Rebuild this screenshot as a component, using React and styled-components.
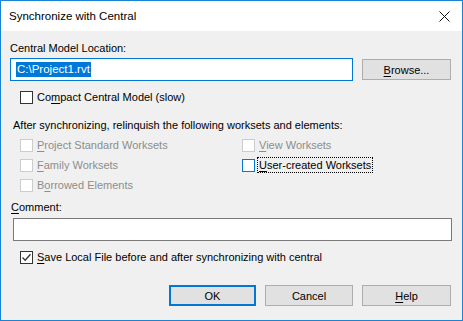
import React from 'react';
import styled, { createGlobalStyle } from 'styled-components';

const Global = createGlobalStyle`
  html, body { margin: 0; padding: 0; background: #ffffff; }
  * { box-sizing: border-box; }
`;

const Window = styled.div`
  width: 463px;
  height: 321px;
  border: 1px solid #1883d7;
  background: #f0f0f0;
  display: flex;
  flex-direction: column;
  font-family: "Liberation Sans", Arial, sans-serif;
  font-size: 11px;
  color: #000;
`;

const TitleBar = styled.div`
  height: 30px;
  background: #fff;
  display: flex;
  align-items: center;
  justify-content: space-between;
  padding: 0 12px 0 8px;
  font-size: 11.5px;
`;

const Close = styled.svg`
  width: 11px;
  height: 11px;
`;

const Body = styled.div`
  display: flex;
  flex-direction: column;
  padding: 0 10px 0 9px;
`;

const Label = styled.div`
  height: 16px;
  line-height: 16px;
  margin-top: ${p => p.top || 0}px;
  padding-left: ${p => p.indent || 0}px;
`;

const Row = styled.div`
  display: flex;
  align-items: center;
  gap: ${p => p.gap || 0}px;
  margin-top: ${p => p.top || 0}px;
  padding-left: ${p => p.indent || 0}px;
`;

const Field = styled.div`
  height: 23px;
  background: #fff;
  border: 1px solid ${p => (p.focused ? '#0078d7' : '#7a7a7a')};
  display: flex;
  align-items: center;
  padding-left: 5px;
  width: ${p => p.width}px;
`;

const Selected = styled.span`
  background: #0078d7;
  color: #fff;
  font-size: 11.5px;
  line-height: 15px;
  padding: 0 1px;
`;

const Button = styled.div`
  width: ${p => p.width || 88}px;
  height: 21px;
  background: #e1e1e1;
  border: ${p => (p.primary ? '2px solid #0078d7' : '1px solid #adadad')};
  display: flex;
  align-items: center;
  justify-content: center;
`;

const Check = styled.label`
  display: flex;
  align-items: center;
  height: 16px;
  color: ${p => (p.disabled ? '#8d8d8d' : '#000')};
`;

const Box = styled.span`
  width: 13px;
  height: 13px;
  background: #fff;
  border: 1px solid ${p => (p.disabled ? '#cccccc' : p.hot ? '#0078d7' : '#333333')};
  margin-right: 3px;
  display: flex;
  align-items: center;
  justify-content: center;
  flex-shrink: 0;
`;

const Caption = styled.span`
  padding: 0 1px;
  line-height: 14px;
  outline: ${p => (p.focus ? '1px dotted #000' : 'none')};
  outline-offset: 0;
`;

const Grid = styled.div`
  display: grid;
  grid-template-columns: 222px 1fr;
  row-gap: 4px;
  margin-top: 4px;
  padding-left: 10px;
`;

const Footer = styled.div`
  display: flex;
  justify-content: flex-end;
  gap: 9px;
  margin-top: 20px;
  padding-right: 1px;
`;

const U = styled.u`
  text-decoration-thickness: 1px;
  text-underline-offset: 2px;
`;

const Tick = () => (
  <svg width="11" height="11" viewBox="0 0 11 11">
    <path d="M1.5 5.5 L4.2 8.3 L9.5 2.2" fill="none" stroke="#333" strokeWidth="1.3" />
  </svg>
);

const CheckItem = ({ pre = '', u, post, disabled, hot, focus, checked }) => (
  <Check disabled={disabled}>
    <Box disabled={disabled} hot={hot}>{checked && <Tick />}</Box>
    <Caption focus={focus}>
      {pre}<U>{u}</U>{post}
    </Caption>
  </Check>
);

const App = () => (
  <>
    <Global />
    <Window>
      <TitleBar>
        <span>Synchronize with Central</span>
        <Close viewBox="0 0 11 11">
          <path d="M0.5 0.5 L10.5 10.5 M10.5 0.5 L0.5 10.5" stroke="#111" strokeWidth="1" />
        </Close>
      </TitleBar>
      <Body>
        <Label top={9}>Central Model Location:</Label>
        <Row top={2} gap={9}>
          <Field width={343} focused>
            <Selected>C:\Project1.rvt</Selected>
          </Field>
          <Button width={89}><span><U>B</U>rowse...</span></Button>
        </Row>
        <Row top={8} indent={10}>
          <CheckItem pre="Co" u="m" post="pact Central Model (slow)" />
        </Row>
        <Label top={12} indent={3}>After synchronizing, relinquish the following worksets and elements:</Label>
        <Grid>
          <CheckItem u="P" post="roject Standard Worksets" disabled />
          <CheckItem u="V" post="iew Worksets" disabled />
          <CheckItem u="F" post="amily Worksets" disabled />
          <CheckItem u="U" post="ser-created Worksets" hot focus />
          <CheckItem pre="B" u="o" post="rrowed Elements" disabled />
        </Grid>
        <Label top={6} indent={1}><U>C</U>omment:</Label>
        <Row top={3} indent={3}>
          <Field width={440} />
        </Row>
        <Row top={8} indent={10}>
          <CheckItem u="S" post="ave Local File before and after synchronizing with central" checked />
        </Row>
        <Footer>
          <Button width={87} primary>OK</Button>
          <Button width={88}>Cancel</Button>
          <Button width={89}><span><U>H</U>elp</span></Button>
        </Footer>
      </Body>
    </Window>
  </>
);

export default App;
